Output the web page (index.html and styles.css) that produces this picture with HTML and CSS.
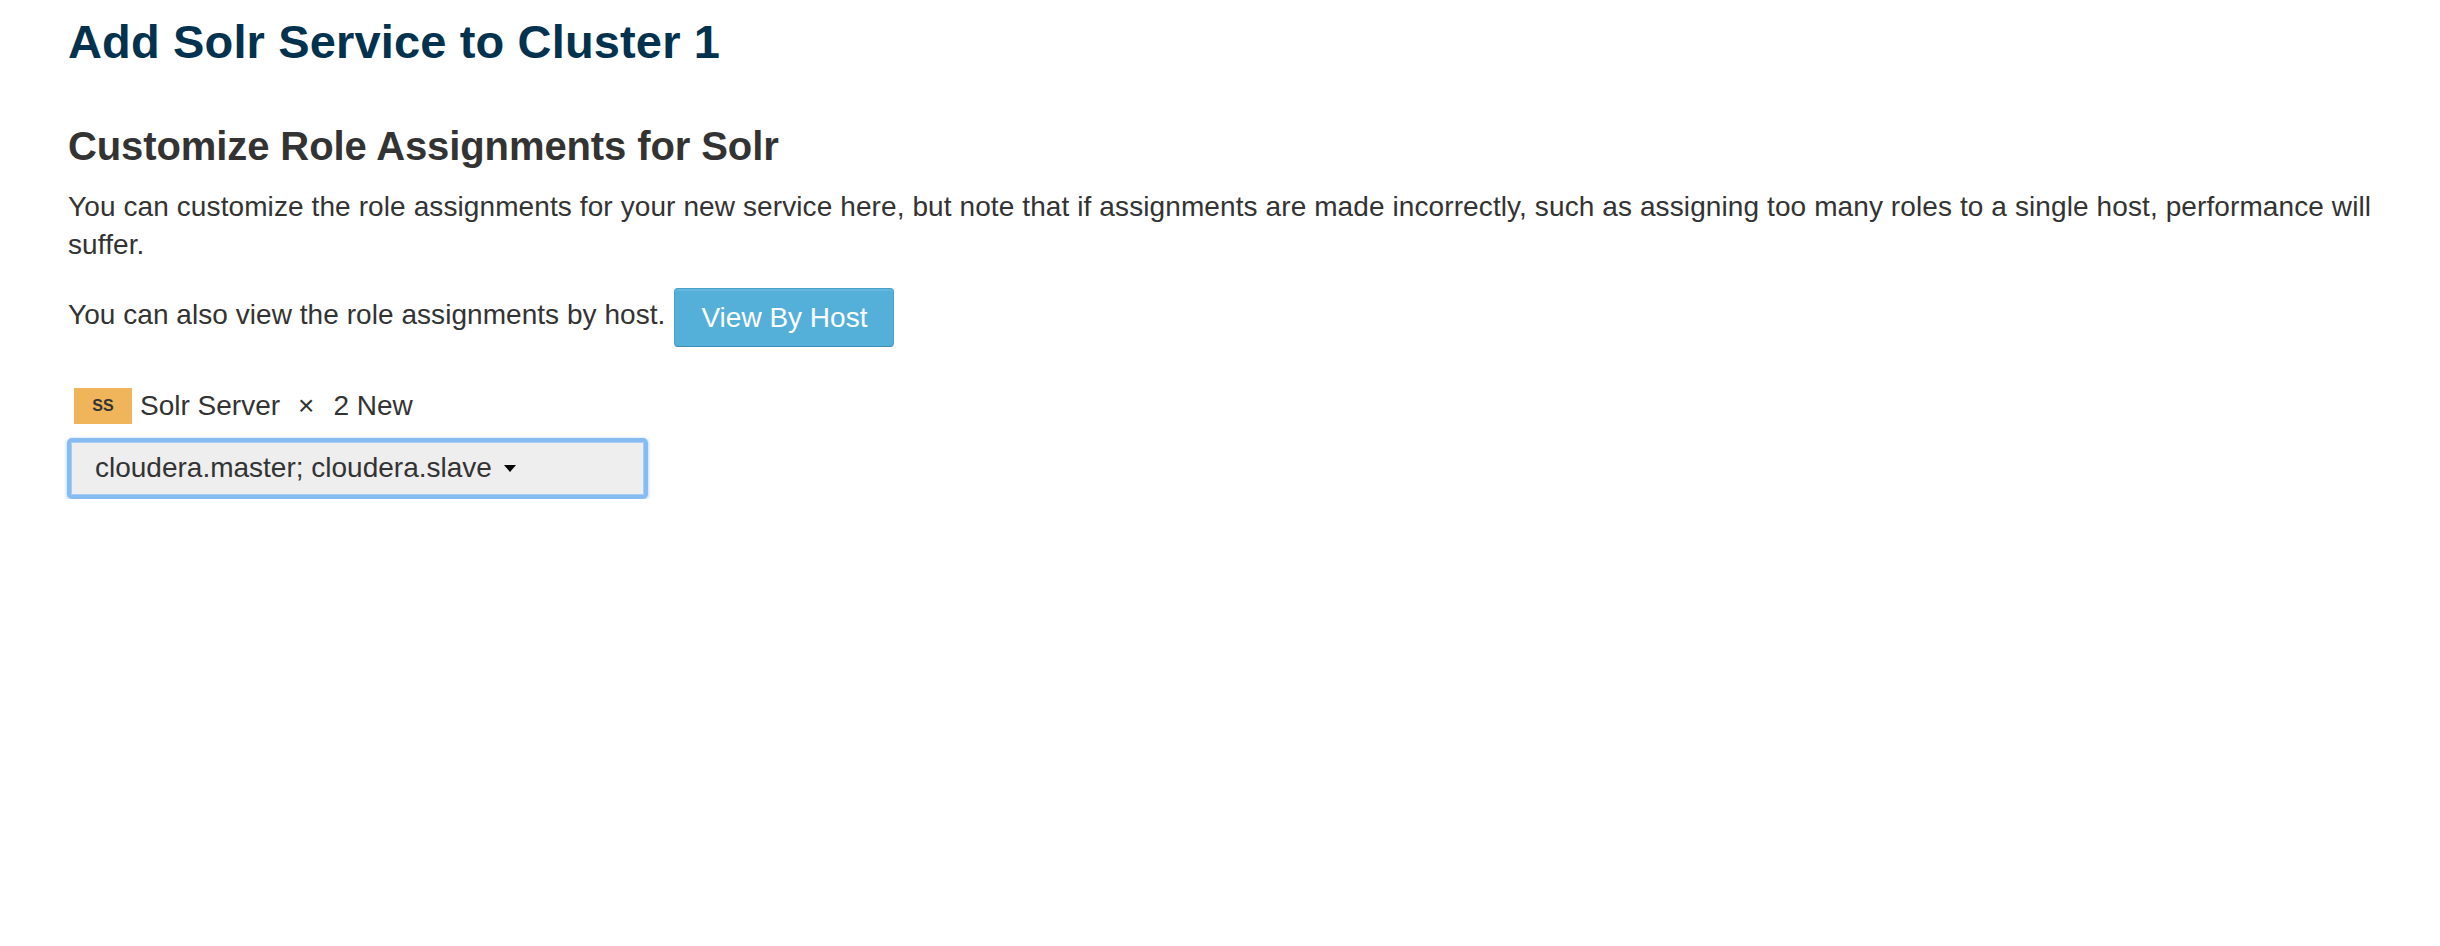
FILE: index.html
```html
<!DOCTYPE html>
<html lang="en">
<head>
<meta charset="utf-8">
<title>Add Solr Service to Cluster 1</title>
<link rel="stylesheet" href="styles.css">
</head>
<body>
<div class="page">
  <h1 class="page-title">Add Solr Service to Cluster 1</h1>
  <h2 class="section-title">Customize Role Assignments for Solr</h2>
  <p class="intro">You can customize the role assignments for your new service here, but note that if assignments are made incorrectly, such as assigning too many roles to a single host, performance will suffer.</p>
  <div class="host-row">
    <span class="host-text">You can also view the role assignments by host.</span>
    <button class="btn-info" type="button">View By Host</button>
  </div>
  <div class="role-row">
    <span class="role-badge">SS</span>
    <span class="role-name">Solr Server</span>
    <span class="times">×</span>
    <span class="role-count">2 New</span>
  </div>
  <button class="host-select" type="button"><span class="host-select-label">cloudera.master; cloudera.slave</span><span class="caret"></span></button>
</div>
</body>
</html>
```

FILE: styles.css
```css
html, body {
  margin: 0;
  padding: 0;
  background: #ffffff;
}

body {
  font-family: "Liberation Sans", Arial, sans-serif;
  color: #333333;
}

.page {
  padding: 16px 40px 0 68px;
}

.page-title {
  margin: 0;
  font-size: 47px;
  line-height: 1.1;
  font-weight: 700;
  letter-spacing: 0.15px;
  color: #03324f;
}

.section-title {
  margin: 56px 0 0;
  font-size: 40px;
  line-height: 1.1;
  font-weight: 700;
  letter-spacing: -0.1px;
  color: #333333;
}

.intro {
  margin: 20px 0 0;
  font-size: 28px;
  line-height: 38px;
  letter-spacing: 0.1px;
}

.host-row {
  display: flex;
  align-items: flex-start;
  margin-top: 24px;
}

.host-text {
  margin-top: 8px;
  font-size: 28px;
  line-height: 38px;
  letter-spacing: 0.05px;
}

.btn-info {
  margin: 0 0 0 9px;
  padding: 8px 26px;
  font-family: inherit;
  font-size: 28px;
  line-height: 41px;
  color: #ffffff;
  background: #54afd9;
  border: 1px solid #46a2cc;
  border-bottom-color: #3b8db4;
  border-radius: 4px;
  box-shadow: inset 0 2px 0 rgba(255, 255, 255, 0.12);
}

.role-row {
  display: flex;
  align-items: center;
  margin-top: 40px;
  font-size: 28px;
  line-height: 38px;
}

.role-badge {
  margin-left: 6px;
  width: 58px;
  height: 36px;
  line-height: 36px;
  text-align: center;
  background: #f0b55b;
  color: #333333;
  font-size: 16px;
  font-weight: 700;
}

.role-name {
  margin-left: 8px;
}

.times {
  margin: 0 19px 0 18px;
}

.host-select {
  display: flex;
  align-items: center;
  box-sizing: border-box;
  margin: 13px 0 0 -1px;
  width: 581px;
  height: 61px;
  padding: 0 0 0 24px;
  font-family: inherit;
  font-size: 28px;
  color: #333333;
  background: #eeeeee;
  border: 4px solid #86bcf2;
  border-radius: 5px;
  box-shadow: inset 0 0 0 1px #a9cdf2, 0 1px 3px 1px rgba(120, 180, 245, 0.45);
  outline: none;
}

.caret {
  display: inline-block;
  margin-left: 12px;
  width: 0;
  height: 0;
  border-top: 7px solid #000000;
  border-left: 6px solid transparent;
  border-right: 6px solid transparent;
}
```
